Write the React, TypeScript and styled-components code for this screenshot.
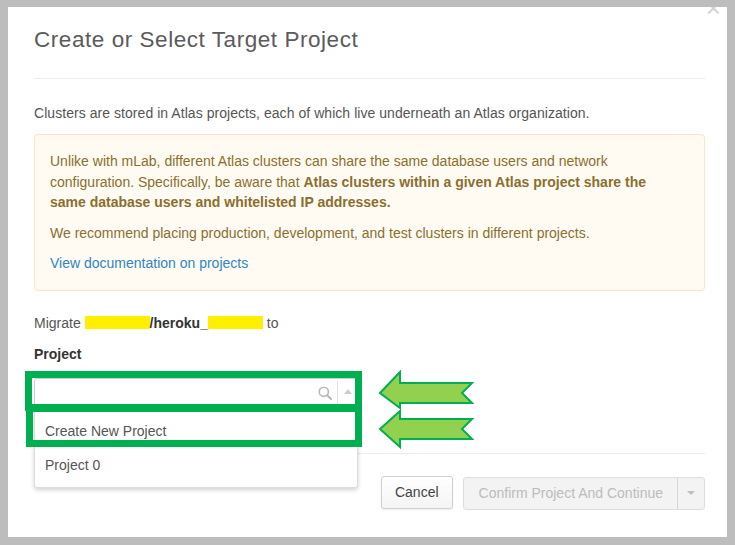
import React from "react";
import styled, { createGlobalStyle } from "styled-components";

const Global = createGlobalStyle`
  html, body { margin: 0; padding: 0; }
  body {
    background: #bdbdbd;
    font-family: "Liberation Sans", Arial, sans-serif;
    width: 735px;
    height: 545px;
    overflow: hidden;
  }
`;

const Frame = styled.div`
  width: 735px;
  height: 545px;
  box-sizing: border-box;
  padding: 7px 8px 8px 8px;
  background: #bdbdbd;
`;

const Modal = styled.div`
  position: relative;
  width: 719px;
  height: 530px;
  box-sizing: border-box;
  padding: 0 22px 0 26px;
  background: #fff;
  overflow: hidden;
`;

const Close = styled.span`
  position: absolute;
  right: 6px;
  top: -12px;
  font-size: 26px;
  line-height: 26px;
  color: #d4d4d4;
`;

const Header = styled.div`
  height: 72px;
  box-sizing: border-box;
  padding-top: 21px;
  border-bottom: 1px solid #ececec;
`;

const Title = styled.h1`
  margin: 0;
  font-size: 22.5px;
  line-height: 24px;
  font-weight: 400;
  color: #5b5b5b;
  letter-spacing: 0.55px;
`;

const Intro = styled.p`
  margin: 24px 0 0;
  font-size: 14px;
  line-height: 20px;
  color: #555;
  letter-spacing: 0.05px;
`;

const Warning = styled.div`
  margin-top: 11px;
  padding: 16px 40px 16px 15px;
  border: 1px solid #f6e6c3;
  border-radius: 4px;
  background: #fffbf3;
  color: #8a6f2e;
  font-size: 14px;
  line-height: 20.5px;
`;

const WarnPara = styled.p`
  margin: 0 0 10px;
`;

const DocLink = styled.a`
  color: #2f86c6;
  text-decoration: none;
`;

const Migrate = styled.div`
  margin-top: 22px;
  display: flex;
  align-items: center;
  font-size: 14px;
  line-height: 20px;
  color: #555;
`;

const Redact = styled.span<{ $w: number }>`
  display: inline-block;
  width: ${(p) => p.$w}px;
  height: 13px;
  background: #ffef00;
`;

const DbName = styled.b`
  color: #333;
`;

const Label = styled.div`
  margin-top: 11px;
  font-size: 14px;
  line-height: 20px;
  font-weight: 700;
  color: #333;
`;

const SelectWrap = styled.div`
  position: relative;
  margin-top: 14px;
  width: 324px;
`;

const SelectBox = styled.div`
  height: 30px;
  box-sizing: border-box;
  border: 1px solid #ccc;
  border-radius: 3px 3px 0 0;
  display: flex;
  align-items: center;
  justify-content: flex-end;
  background: #fff;
`;

const SearchIcon = styled.span`
  display: flex;
  padding-right: 5px;
`;

const Sep = styled.span`
  width: 1px;
  height: 24px;
  background: #e2e2e2;
`;

const CaretUp = styled.span`
  width: 0;
  height: 0;
  margin: 0 5px 2px 6px;
  border-left: 4px solid transparent;
  border-right: 4px solid transparent;
  border-bottom: 5px solid #ccc;
`;

const Menu = styled.div`
  position: absolute;
  left: 0;
  right: 0;
  top: 30px;
  padding: 6px 0 5px;
  background: #fff;
  border: 1px solid #ddd;
  border-top: none;
  border-radius: 0 0 3px 3px;
  box-shadow: 0 2px 4px rgba(0, 0, 0, 0.18);
  z-index: 2;
`;

const Option = styled.div`
  height: 34px;
  display: flex;
  align-items: center;
  padding-left: 10px;
  font-size: 14px;
  color: #555;
`;

const Highlight = styled.div<{ $top: number; $left: number; $w: number; $h: number }>`
  position: absolute;
  top: ${(p) => p.$top}px;
  left: ${(p) => p.$left}px;
  width: ${(p) => p.$w}px;
  height: ${(p) => p.$h}px;
  box-sizing: border-box;
  border: 7px solid #00b050;
  z-index: 3;
`;

const Arrows = styled.svg`
  position: absolute;
  left: 362px;
  top: 363px;
  z-index: 3;
`;

const Footer = styled.div`
  margin-top: 45px;
  border-top: 1px solid #ececec;
  padding-top: 22px;
  display: flex;
  justify-content: flex-end;
  gap: 10px;
`;

const Button = styled.button`
  height: 33px;
  box-sizing: border-box;
  padding: 0 13px;
  border: 1px solid #d0d0d0;
  border-radius: 3px;
  background: linear-gradient(#ffffff, #f4f4f4);
  box-shadow: 0 1px 2px rgba(0, 0, 0, 0.08);
  font-family: "Liberation Sans", Arial, sans-serif;
  font-size: 14px;
  color: #444;
`;

const Split = styled.div`
  display: flex;
  height: 33px;
  margin-top: 1px;
  box-sizing: border-box;
  border: 1px solid #dedede;
  border-radius: 3px;
  background: #f3f3f3;
`;

const SplitMain = styled.span`
  display: flex;
  align-items: center;
  padding: 0 14px 0 15px;
  font-size: 14px;
  color: #bcbcbc;
  border-right: 1px solid #d6d6d6;
`;

const SplitCaret = styled.span`
  display: flex;
  align-items: center;
  justify-content: center;
  width: 26px;
  &::after {
    content: "";
    border-left: 4px solid transparent;
    border-right: 4px solid transparent;
    border-top: 4px solid #bdbdbd;
  }
`;

export default function App() {
  return (
    <>
      <Global />
      <Frame>
        <Modal>
          <Close>×</Close>
          <Header>
            <Title>Create or Select Target Project</Title>
          </Header>
          <Intro>
            Clusters are stored in Atlas projects, each of which live underneath an Atlas organization.
          </Intro>
          <Warning>
            <WarnPara>
              Unlike with mLab, different Atlas clusters can share the same database users and network
              configuration. Specifically, be aware that{" "}
              <b>Atlas clusters within a given Atlas project share the same database users and whitelisted IP addresses.</b>
            </WarnPara>
            <WarnPara>
              We recommend placing production, development, and test clusters in different projects.
            </WarnPara>
            <DocLink href="#">View documentation on projects</DocLink>
          </Warning>
          <Migrate>
            Migrate&nbsp;<Redact $w={65} />
            <DbName>/heroku_</DbName>
            <Redact $w={55} />
            &nbsp;to
          </Migrate>
          <Label>Project</Label>
          <SelectWrap>
            <SelectBox>
              <SearchIcon>
                <svg width="14" height="14" viewBox="0 0 14 14">
                  <circle cx="5.8" cy="5.8" r="4.6" fill="none" stroke="#b8b8b8" strokeWidth="1.6" />
                  <line x1="9.2" y1="9.2" x2="13" y2="13" stroke="#b8b8b8" strokeWidth="2" strokeLinecap="round" />
                </svg>
              </SearchIcon>
              <Sep />
              <CaretUp />
            </SelectBox>
            <Menu>
              <Option>Create New Project</Option>
              <Option>Project 0</Option>
            </Menu>
          </SelectWrap>
          <Footer>
            <Button>Cancel</Button>
            <Split>
              <SplitMain>Confirm Project And Continue</SplitMain>
              <SplitCaret />
            </Split>
          </Footer>
          <Highlight $top={364} $left={17} $w={337} $h={40} />
          <Highlight $top={398} $left={18} $w={336} $h={42} />
          <Arrows width="110" height="82" viewBox="0 0 110 82">
            <path
              d="M10 23 L30 2 L30 13 L102 13 L92 23 L102 33 L30 33 L30 38 Z"
              fill="#92d050"
              stroke="#00b050"
              strokeWidth="2"
              strokeLinejoin="miter"
            />
            <path
              d="M10 59 L30 41 L30 49 L102 49 L92 59 L102 69 L30 69 L30 77 Z"
              fill="#92d050"
              stroke="#00b050"
              strokeWidth="2"
              strokeLinejoin="miter"
            />
          </Arrows>
        </Modal>
      </Frame>
    </>
  );
}
